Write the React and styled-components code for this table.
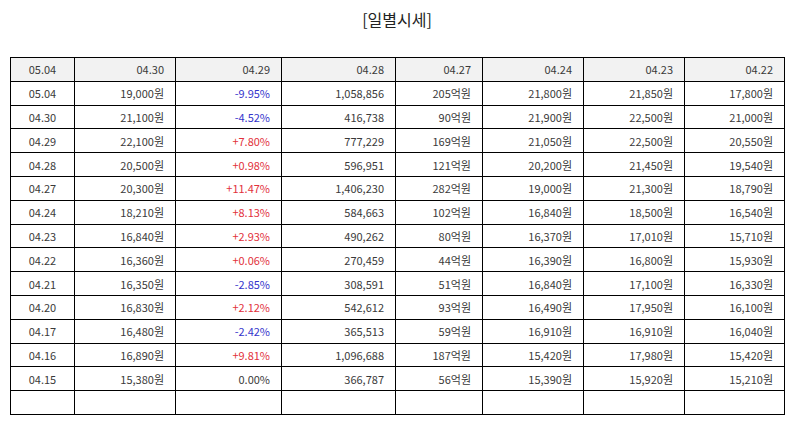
import React from "react";
import styled, { createGlobalStyle } from "styled-components";

const Global = createGlobalStyle`
  html, body { margin: 0; padding: 0; background: #fff; }
  body { font-family: "Noto Sans CJK KR", "Noto Sans", sans-serif; color: #333; }
`;

const Page = styled.div`
  padding: 0 10px;
  width: 774px;
`;

const Title = styled.div`
  padding-top: 9px;
  height: 20px;
  line-height: 20px;
  margin-bottom: 28px;
  text-align: center;
  font-size: 16px;
  color: #222;
`;

const Table = styled.table`
  width: 774px;
  border-collapse: collapse;
  table-layout: fixed;
  border: 1px solid #000;
  font-size: 11px;
`;

const Col = styled.col`
  width: ${(p) => p.$w}px;
`;

const Row = styled.tr`
  height: 23.8px;
  background: ${(p) => (p.$head ? "#f2f2f2" : "#fff")};
`;

const Cell = styled.td`
  border: 1px solid #000;
  padding: ${(p) => (p.$center ? "0 4px" : "0 11px 0 4px")};
  text-align: ${(p) => (p.$center ? "center" : "right")};
  color: ${(p) => (p.$tone === "up" ? "#e2313b" : p.$tone === "down" ? "#3434cc" : "#3a3a3a")};
  white-space: nowrap;
  line-height: 14px;
  font-weight: normal;
`;

const widths = [64, 101, 106, 114, 87, 101, 101, 100];

const header = ["05.04", "04.30", "04.29", "04.28", "04.27", "04.24", "04.23", "04.22"];

const rows = [
  ["05.04", "19,000원", "-9.95%", "1,058,856", "205억원", "21,800원", "21,850원", "17,800원"],
  ["04.30", "21,100원", "-4.52%", "416,738", "90억원", "21,900원", "22,500원", "21,000원"],
  ["04.29", "22,100원", "+7.80%", "777,229", "169억원", "21,050원", "22,500원", "20,550원"],
  ["04.28", "20,500원", "+0.98%", "596,951", "121억원", "20,200원", "21,450원", "19,540원"],
  ["04.27", "20,300원", "+11.47%", "1,406,230", "282억원", "19,000원", "21,300원", "18,790원"],
  ["04.24", "18,210원", "+8.13%", "584,663", "102억원", "16,840원", "18,500원", "16,540원"],
  ["04.23", "16,840원", "+2.93%", "490,262", "80억원", "16,370원", "17,010원", "15,710원"],
  ["04.22", "16,360원", "+0.06%", "270,459", "44억원", "16,390원", "16,800원", "15,930원"],
  ["04.21", "16,350원", "-2.85%", "308,591", "51억원", "16,840원", "17,100원", "16,330원"],
  ["04.20", "16,830원", "+2.12%", "542,612", "93억원", "16,490원", "17,950원", "16,100원"],
  ["04.17", "16,480원", "-2.42%", "365,513", "59억원", "16,910원", "16,910원", "16,040원"],
  ["04.16", "16,890원", "+9.81%", "1,096,688", "187억원", "15,420원", "17,980원", "15,420원"],
  ["04.15", "15,380원", "0.00%", "366,787", "56억원", "15,390원", "15,920원", "15,210원"],
  ["", "", "", "", "", "", "", ""],
];

const toneOf = (v, i) => {
  if (i !== 2) return undefined;
  if (v.startsWith("+")) return "up";
  if (v.startsWith("-")) return "down";
  return undefined;
};

export default function App() {
  return (
    <Page>
      <Global />
      <Title>[일별시세]</Title>
      <Table>
        <colgroup>
          {widths.map((w, i) => (
            <Col key={i} $w={w} />
          ))}
        </colgroup>
        <thead>
          <Row $head>
            {header.map((h, i) => (
              <Cell as="th" key={i} $center={i === 0}>
                {h}
              </Cell>
            ))}
          </Row>
        </thead>
        <tbody>
          {rows.map((r, ri) => (
            <Row key={ri}>
              {r.map((v, i) => (
                <Cell key={i} $center={i === 0} $tone={toneOf(v, i)}>
                  {v}
                </Cell>
              ))}
            </Row>
          ))}
        </tbody>
      </Table>
    </Page>
  );
}
